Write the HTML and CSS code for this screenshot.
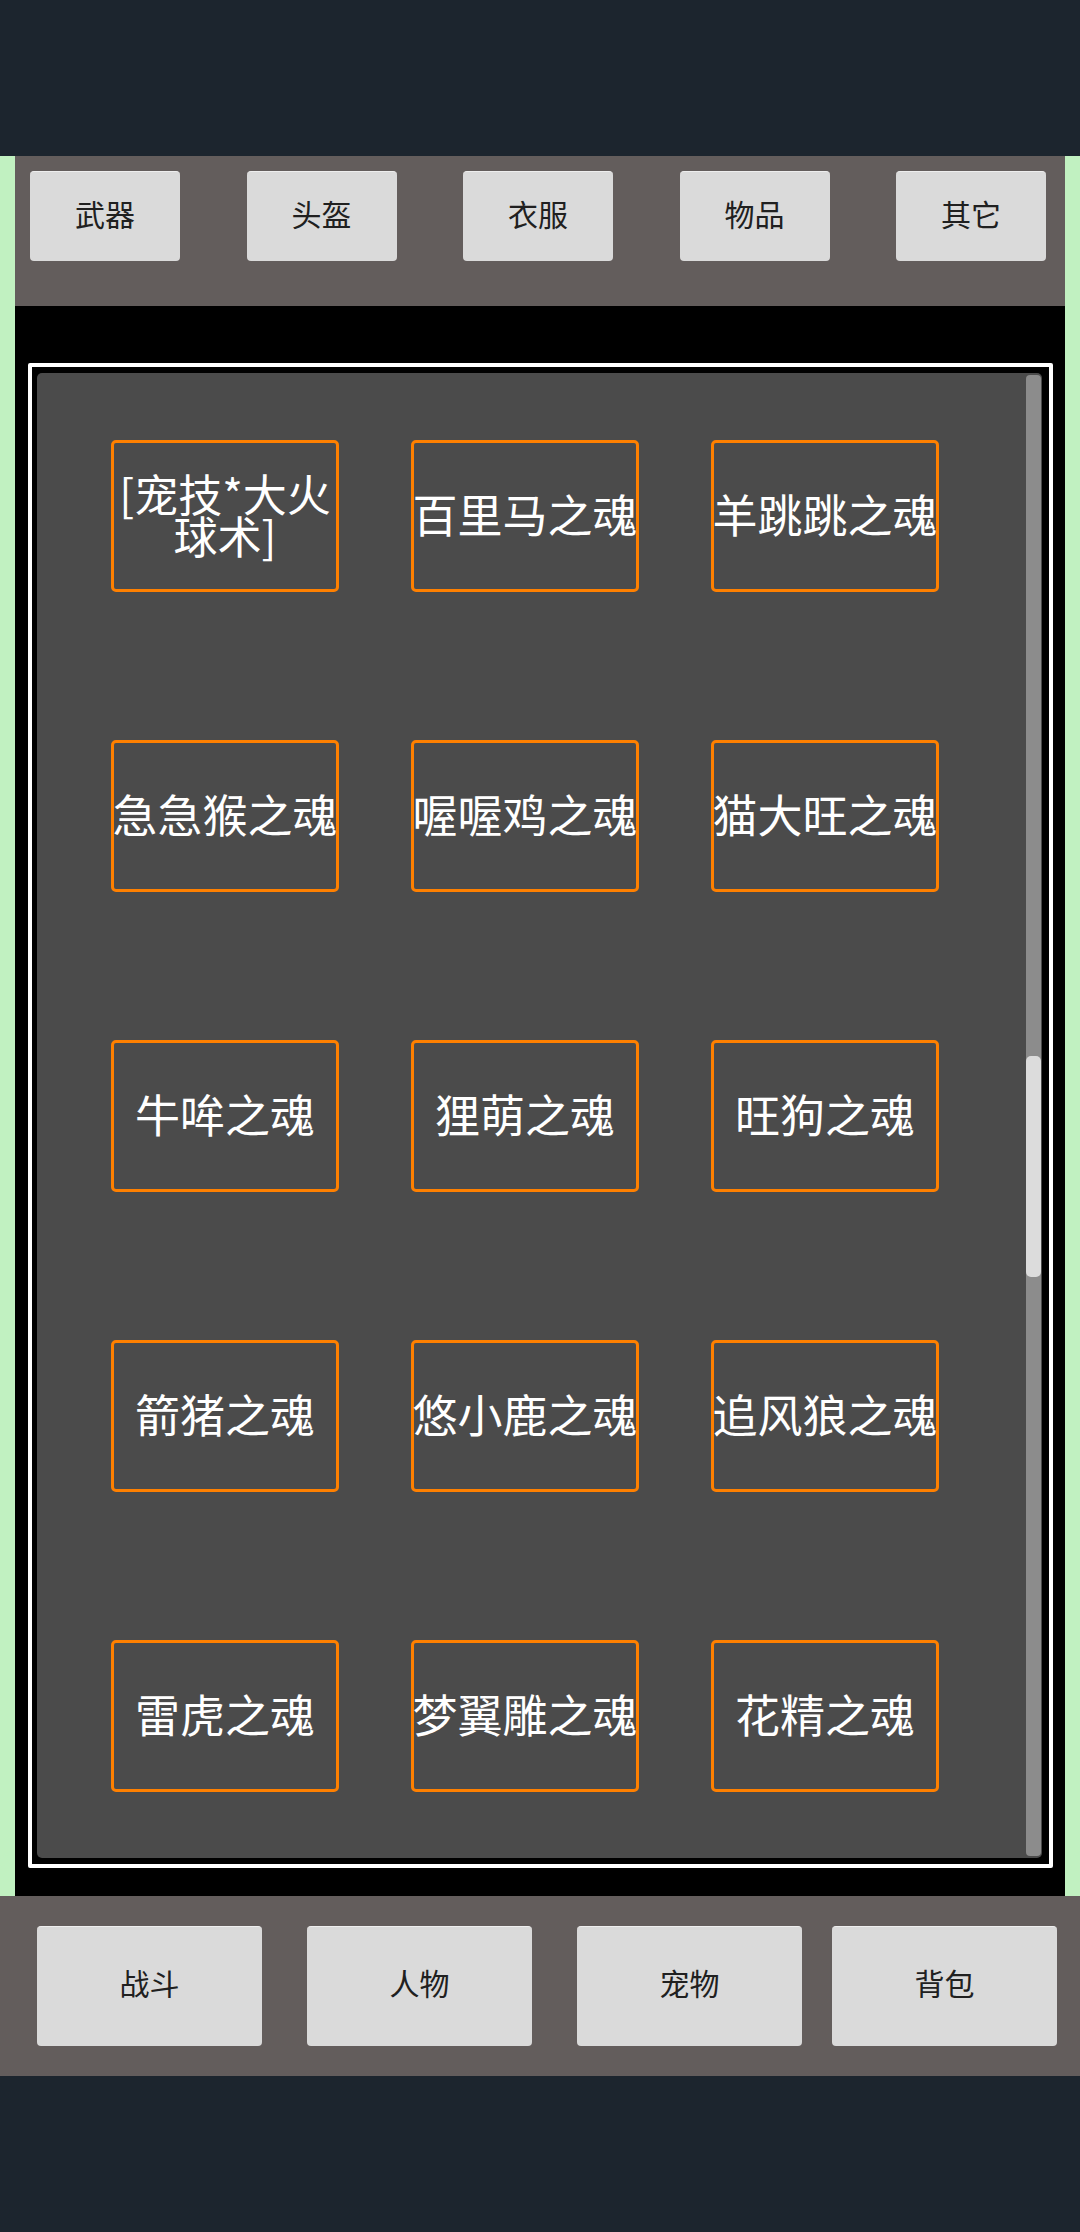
FILE: index.html
```html
<!DOCTYPE html>
<html lang="zh-CN">
<head>
<meta charset="utf-8">
<title>背包</title>
<link rel="stylesheet" href="styles.css">
</head>
<body>
<div class="status-space"></div>
<div class="main">
  <div class="side"></div>
  <div class="content">
    <div class="tabbar">
      <div class="btn tab">武器</div>
      <div class="btn tab">头盔</div>
      <div class="btn tab">衣服</div>
      <div class="btn tab">物品</div>
      <div class="btn tab">其它</div>
    </div>
    <div class="stage">
      <div class="frame">
        <div class="panel">
          <div class="grid">
            <div class="item item-wrap">[宠技*大火球术]</div>
            <div class="item">百里马之魂</div>
            <div class="item">羊跳跳之魂</div>
            <div class="item">急急猴之魂</div>
            <div class="item">喔喔鸡之魂</div>
            <div class="item">猫大旺之魂</div>
            <div class="item">牛哞之魂</div>
            <div class="item">狸萌之魂</div>
            <div class="item">旺狗之魂</div>
            <div class="item">箭猪之魂</div>
            <div class="item">悠小鹿之魂</div>
            <div class="item">追风狼之魂</div>
            <div class="item">雷虎之魂</div>
            <div class="item">梦翼雕之魂</div>
            <div class="item">花精之魂</div>
          </div>
          <div class="scrollbar"><div class="thumb"></div></div>
        </div>
      </div>
    </div>
  </div>
  <div class="side"></div>
</div>
<div class="navbar">
  <div class="btn nav">战斗</div>
  <div class="btn nav">人物</div>
  <div class="btn nav">宠物</div>
  <div class="btn nav nav-last">背包</div>
</div>
<div class="bottom-space"></div>
</body>
</html>
```

FILE: styles.css
```css
html, body {
  margin: 0;
  padding: 0;
}
body {
  width: 1080px;
  height: 2232px;
  background: #1c252e;
  font-family: "Noto Sans CJK SC", "Noto Sans", sans-serif;
  overflow: hidden;
}
.status-space {
  height: 156px;
}
.main {
  display: flex;
  height: 1740px;
}
.side {
  width: 15px;
  background: #c1f1c1;
}
.content {
  width: 1050px;
  display: flex;
  flex-direction: column;
}
.tabbar {
  height: 150px;
  box-sizing: border-box;
  background: #635d5c;
  display: flex;
  justify-content: space-between;
  align-items: flex-start;
  padding: 15px 19px 0 15px;
}
.btn {
  background: #dadada;
  border-top: 1px solid #eeeeee;
  box-sizing: border-box;
  border-radius: 4px;
  color: #202020;
  font-size: 30px;
  line-height: 1;
  display: flex;
  align-items: center;
  justify-content: center;
}
.tab {
  width: 150px;
  height: 90px;
  padding-bottom: 8px;
}
.stage {
  flex: 1;
  background: #000;
  padding: 57px 0 0 13px;
  box-sizing: border-box;
}
.frame {
  width: 1025px;
  height: 1505px;
  box-sizing: border-box;
  border: 4px solid #ffffff;
  border-radius: 2px;
  padding: 6px 7px 6px 5px;
  background: #000;
}
.panel {
  position: relative;
  height: 100%;
  background: #4b4b4b;
  border-radius: 5px;
  overflow: hidden;
}
.grid {
  display: grid;
  grid-template-columns: repeat(3, 228px);
  grid-auto-rows: 152px;
  column-gap: 72px;
  row-gap: 148px;
  padding: 67px 0 0 74px;
}
.item {
  box-sizing: border-box;
  border: 3px solid #ff8000;
  border-radius: 5px;
  color: #ffffff;
  font-size: 45px;
  line-height: 42px;
  text-align: center;
  white-space: nowrap;
  padding-bottom: 5px;
  display: flex;
  align-items: center;
  justify-content: center;
}
.item-wrap {
  white-space: normal;
  font-size: 44px;
}
.scrollbar {
  position: absolute;
  right: 1px;
  top: 2px;
  bottom: 2px;
  width: 15px;
  background: #8c8c8c;
  border-radius: 4px;
}
.thumb {
  position: absolute;
  left: 0;
  right: 0;
  top: 681px;
  height: 221px;
  background: #dcdcdc;
  border-radius: 5px;
}
.navbar {
  height: 180px;
  box-sizing: border-box;
  background: #635d5c;
  display: flex;
  gap: 45px;
  align-items: flex-start;
  padding: 30px 0 0 37px;
}
.nav {
  width: 225px;
  height: 120px;
  padding-bottom: 10px;
}
.nav-last {
  margin-left: -15px;
}
.bottom-space {
  height: 156px;
}
```
